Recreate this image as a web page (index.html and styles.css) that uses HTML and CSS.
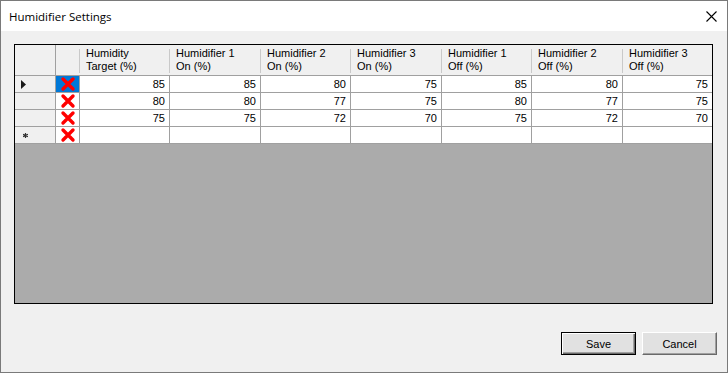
FILE: index.html
```html
<!DOCTYPE html>
<html lang="en">
<head>
    <meta charset="UTF-8">
    <title>Humidifier Settings</title>
    <link rel="stylesheet" href="styles.css">
</head>
<body>
  <div class="window">
    <div class="titlebar">
      <span class="title">Humidifier Settings</span>
      <svg class="close" width="11" height="11" viewBox="0 0 11 11">
        <path d="M0.5 0.5 L10.5 10.5 M10.5 0.5 L0.5 10.5" stroke="#000" stroke-width="1.1" fill="none"/>
      </svg>
    </div>

    <div class="client">
      <div class="grid">
        <div class="row header">
          <div class="cell rowhead"></div>
          <div class="cell colhead"></div>
          <div class="cell colhead">Humidity<br>Target (%)</div>
          <div class="cell colhead">Humidifier 1<br>On (%)</div>
          <div class="cell colhead">Humidifier 2<br>On (%)</div>
          <div class="cell colhead">Humidifier 3<br>On (%)</div>
          <div class="cell colhead">Humidifier 1<br>Off (%)</div>
          <div class="cell colhead">Humidifier 2<br>Off (%)</div>
          <div class="cell colhead last">Humidifier 3<br>Off (%)</div>
        </div>

        <div class="row">
          <div class="cell rowhead">
            <svg width="5" height="9" viewBox="0 0 5 9"><polygon points="0,0 5,4.5 0,9" fill="#1a1a1a"/></svg>
          </div>
          <div class="cell del selected">
            <svg class="xmark" width="16" height="16" viewBox="0 0 16 16"><path d="M3 3 L13 13 M13 3 L3 13"/></svg>
          </div>
          <div class="cell num">85</div>
          <div class="cell num">85</div>
          <div class="cell num">80</div>
          <div class="cell num">75</div>
          <div class="cell num">85</div>
          <div class="cell num">80</div>
          <div class="cell num last">75</div>
        </div>

        <div class="row">
          <div class="cell rowhead"></div>
          <div class="cell del">
            <svg class="xmark" width="16" height="16" viewBox="0 0 16 16"><path d="M3 3 L13 13 M13 3 L3 13"/></svg>
          </div>
          <div class="cell num">80</div>
          <div class="cell num">80</div>
          <div class="cell num">77</div>
          <div class="cell num">75</div>
          <div class="cell num">80</div>
          <div class="cell num">77</div>
          <div class="cell num last">75</div>
        </div>

        <div class="row">
          <div class="cell rowhead"></div>
          <div class="cell del">
            <svg class="xmark" width="16" height="16" viewBox="0 0 16 16"><path d="M3 3 L13 13 M13 3 L3 13"/></svg>
          </div>
          <div class="cell num">75</div>
          <div class="cell num">75</div>
          <div class="cell num">72</div>
          <div class="cell num">70</div>
          <div class="cell num">75</div>
          <div class="cell num">72</div>
          <div class="cell num last">70</div>
        </div>

        <div class="row">
          <div class="cell rowhead">
            <svg class="star" width="5" height="5" viewBox="0 0 5 5"><path d="M2.5 0 V5 M0 1.2 L5 3.8 M0 3.8 L5 1.2" stroke="#333" stroke-width="1.2"/></svg>
          </div>
          <div class="cell del">
            <svg class="xmark" width="16" height="16" viewBox="0 0 16 16"><path d="M3 3 L13 13 M13 3 L3 13"/></svg>
          </div>
          <div class="cell num"></div>
          <div class="cell num"></div>
          <div class="cell num"></div>
          <div class="cell num"></div>
          <div class="cell num"></div>
          <div class="cell num"></div>
          <div class="cell num last"></div>
        </div>
      </div>

      <div class="buttons">
        <button type="button" class="btn default">Save</button>
        <button type="button" class="btn">Cancel</button>
      </div>
    </div>
  </div>
</body>
</html>
```

FILE: styles.css
```css
body {
    margin: 0;
    font-family: "Liberation Sans", Arial, sans-serif;
    font-size: 11px;
    color: #000;
}

.window {
    width: 728px;
    height: 373px;
    box-sizing: border-box;
    border: 1px solid #7a7a7a;
    display: flex;
    flex-direction: column;
    background-color: #f0f0f0;
}

.titlebar {
    height: 30px;
    flex: none;
    background-color: #fff;
    display: flex;
    align-items: center;
    justify-content: space-between;
    padding: 0 10px 0 8px;
}

.title {
    font-family: "Open Sans", "Noto Sans", sans-serif;
    font-size: 11.5px;
    color: #000;
}

.close {
    margin-top: 0;
}

.client {
    flex: 1;
    display: flex;
    flex-direction: column;
    padding: 13px 10px 0 13px;
}

.grid {
    width: 699px;
    height: 260px;
    box-sizing: border-box;
    border: 1px solid #000;
    background-color: #ababab;
}

.row {
    display: grid;
    grid-template-columns: 41px 24px 90px 91px 90px 91px 90px 91px 89px;
    height: 17px;
}

.row.header {
    height: 31px;
}

.cell {
    box-sizing: border-box;
    border-right: 1px solid #a0a0a0;
    border-bottom: 1px solid #a0a0a0;
    background-color: #fff;
}

.cell.last {
    border-right: none;
}

.rowhead {
    background-color: #f0f0f0;
    display: flex;
    align-items: center;
    padding-left: 6px;
}

.colhead {
    border-right: none;
    background: linear-gradient(#c9c9c9, #c9c9c9) right 4px / 1px 24px no-repeat, #f0f0f0;
    padding: 2px 0 0 6px;
    line-height: 13px;
    white-space: nowrap;
}

.colhead.last {
    background: #f0f0f0;
}

.num {
    text-align: right;
    padding: 1px 4px 0 0;
    line-height: 15px;
}

.del {
    display: flex;
    align-items: center;
    justify-content: center;
}

.del.selected {
    background-color: #0078d7;
}

.xmark path {
    stroke: #f00;
    stroke-width: 3.4;
    stroke-linecap: round;
    fill: none;
}

.star {
    margin-left: 2px;
    margin-top: 1px;
}

.buttons {
    display: flex;
    justify-content: flex-end;
    gap: 6px;
    margin-top: 28px;
}

.btn {
    width: 75px;
    height: 23px;
    box-sizing: border-box;
    font-family: "Liberation Sans", Arial, sans-serif;
    font-size: 11px;
    color: #000;
    background-color: #e1e1e1;
    border: 1px solid;
    border-color: #fff #696969 #696969 #fff;
    box-shadow: inset -1px -1px #a0a0a0;
    padding: 0;
}

.btn.default {
    border: 1px solid #000;
    box-shadow: inset 1px 1px #fff, inset -1px -1px #696969, inset -2px -2px #a0a0a0;
}
```
